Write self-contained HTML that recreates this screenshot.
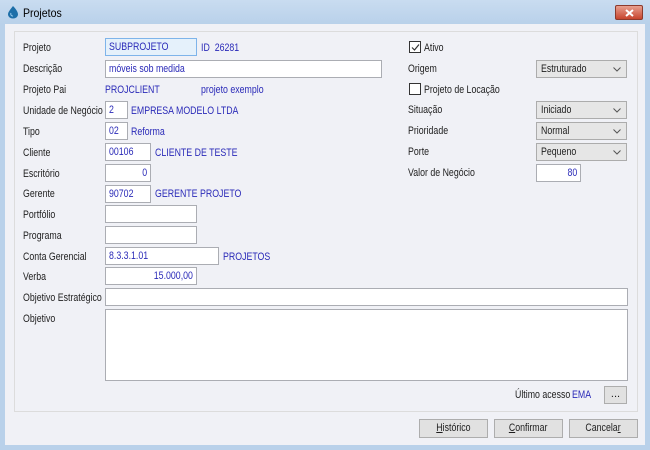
<!DOCTYPE html>
<html><head><meta charset="utf-8"><style>
*{box-sizing:border-box;margin:0;padding:0}
body{width:650px;height:450px;overflow:hidden;background:#b9d1ea;font-family:"Liberation Sans",sans-serif;font-size:11px;color:#1e1e1e;position:relative}
.a{position:absolute;white-space:nowrap}
.title{left:0;top:0;width:650px;height:24px;background:linear-gradient(#c9dcf0,#b9d1ea)}
.client{left:5px;top:24px;width:640px;height:421px;background:#f0f1f6}
.grp{left:14px;top:31px;width:624px;height:381px;border:1px solid #dcdcdc}
.lb{line-height:13px;transform:scaleX(.8);transform-origin:0 0}
.blue{color:#2a2ab8}
.in{background:#fff;border:1px solid #abadb3;height:18px;padding:2px 3px 0;line-height:13px;color:#2a2ab8}
.sel{background:#e6e6e6;border:1px solid #acacac;height:18px;padding:2px 4px 0;line-height:13px;color:#1e1e1e}
.sel svg{position:absolute;right:5px;top:6px}
.t{display:inline-block;transform:scaleX(.8);transform-origin:0 0}
.r{text-align:right}.r .t{transform-origin:100% 0}
.btn{background:#e1e1e1;border:1px solid #adadad;height:19px;text-align:center;line-height:17px}
.btn .t{transform-origin:50% 0}
.cb{width:12px;height:12px;border:1px solid #333;background:#fff}
</style></head><body>
<div class="a title"></div>
<svg class="a" style="left:7px;top:5px" width="12" height="14" viewBox="0 0 12 14"><path d="M6 1 C3 5 1 7 1 9.5 A5 4 0 0 0 11 9.5 C11 7 9 4 6 1Z" fill="#1e6fa8"/><path d="M4 8 A2 2 0 0 0 6 11" stroke="#9fd0f0" fill="none"/></svg>
<div class="a" style="left:23px;top:6px;font-size:12px;color:#000"><span class="t" style="transform:scaleX(.88)">Projetos</span></div>
<div class="a" style="left:615px;top:5px;width:28px;height:15px;background:linear-gradient(#e8a08f,#c7442d);border:1px solid #8c3a2c;border-radius:2px"><svg style="position:absolute;left:9px;top:3px" width="9" height="8"><path d="M1 1L8 7M8 1L1 7" stroke="#fff" stroke-width="2"/></svg></div>
<div class="a client"></div>
<div class="a grp"></div>

<div class="a lb" style="left:23px;top:42px">Projeto</div>
<div class="a in" style="left:105px;top:38px;width:92px;background:#e5f1fb;border-color:#7eb4ea"><span class="t">SUBPROJETO</span></div>
<div class="a lb blue" style="left:201px;top:42px">ID&nbsp; 26281</div>

<div class="a lb" style="left:23px;top:63px">Descrição</div>
<div class="a in" style="left:105px;top:60px;width:277px"><span class="t">móveis sob medida</span></div>

<div class="a lb" style="left:23px;top:84px">Projeto Pai</div>
<div class="a lb blue" style="left:105px;top:84px">PROJCLIENT</div>
<div class="a lb blue" style="left:201px;top:84px">projeto exemplo</div>

<div class="a lb" style="left:23px;top:105px">Unidade de Negócio</div>
<div class="a in" style="left:105px;top:101px;width:23px"><span class="t">2</span></div>
<div class="a lb blue" style="left:131px;top:105px">EMPRESA MODELO LTDA</div>

<div class="a lb" style="left:23px;top:126px">Tipo</div>
<div class="a in" style="left:105px;top:122px;width:23px"><span class="t">02</span></div>
<div class="a lb blue" style="left:131px;top:126px">Reforma</div>

<div class="a lb" style="left:23px;top:147px">Cliente</div>
<div class="a in" style="left:105px;top:143px;width:46px"><span class="t">00106</span></div>
<div class="a lb blue" style="left:155px;top:147px">CLIENTE DE TESTE</div>

<div class="a lb" style="left:23px;top:168px">Escritório</div>
<div class="a in r" style="left:105px;top:164px;width:46px"><span class="t">0</span></div>

<div class="a lb" style="left:23px;top:188px">Gerente</div>
<div class="a in" style="left:105px;top:185px;width:46px"><span class="t">90702</span></div>
<div class="a lb blue" style="left:155px;top:188px">GERENTE PROJETO</div>

<div class="a lb" style="left:23px;top:209px">Portfólio</div>
<div class="a in" style="left:105px;top:205px;width:92px"></div>

<div class="a lb" style="left:23px;top:230px">Programa</div>
<div class="a in" style="left:105px;top:226px;width:92px"></div>

<div class="a lb" style="left:23px;top:251px">Conta Gerencial</div>
<div class="a in" style="left:105px;top:247px;width:114px"><span class="t">8.3.3.1.01</span></div>
<div class="a lb blue" style="left:223px;top:251px">PROJETOS</div>

<div class="a lb" style="left:23px;top:271px">Verba</div>
<div class="a in r" style="left:105px;top:267px;width:92px"><span class="t">15.000,00</span></div>

<div class="a lb" style="left:23px;top:292px">Objetivo Estratégico</div>
<div class="a in" style="left:105px;top:288px;width:523px"></div>

<div class="a lb" style="left:23px;top:313px">Objetivo</div>
<div class="a in" style="left:105px;top:309px;width:523px;height:72px"></div>

<div class="a cb" style="left:409px;top:41px"><svg style="position:absolute;left:1px;top:1px" width="9" height="9"><path d="M1 4.5L3.5 7L8 1.5" stroke="#333" fill="none" stroke-width="1.2"/></svg></div>
<div class="a lb" style="left:424px;top:42px">Ativo</div>

<div class="a lb" style="left:408px;top:63px">Origem</div>
<div class="a sel" style="left:536px;top:60px;width:91px"><span class="t">Estruturado</span><svg width="8" height="5"><path d="M0.5 0.5L4 4L7.5 0.5" stroke="#555" fill="none"/></svg></div>

<div class="a cb" style="left:409px;top:83px"></div>
<div class="a lb" style="left:424px;top:84px">Projeto de Locação</div>

<div class="a lb" style="left:408px;top:104px">Situação</div>
<div class="a sel" style="left:536px;top:101px;width:91px"><span class="t">Iniciado</span><svg width="8" height="5"><path d="M0.5 0.5L4 4L7.5 0.5" stroke="#555" fill="none"/></svg></div>

<div class="a lb" style="left:408px;top:125px">Prioridade</div>
<div class="a sel" style="left:536px;top:122px;width:91px"><span class="t">Normal</span><svg width="8" height="5"><path d="M0.5 0.5L4 4L7.5 0.5" stroke="#555" fill="none"/></svg></div>

<div class="a lb" style="left:408px;top:146px">Porte</div>
<div class="a sel" style="left:536px;top:143px;width:91px"><span class="t">Pequeno</span><svg width="8" height="5"><path d="M0.5 0.5L4 4L7.5 0.5" stroke="#555" fill="none"/></svg></div>

<div class="a lb" style="left:408px;top:167px">Valor de Negócio</div>
<div class="a in r" style="left:536px;top:164px;width:45px"><span class="t">80</span></div>

<div class="a lb" style="left:515px;top:389px">Último acesso</div>
<div class="a lb blue" style="left:572px;top:389px">EMA</div>
<div class="a btn" style="left:604px;top:386px;width:23px;height:18px;line-height:14px">...</div>

<div class="a btn" style="left:419px;top:419px;width:69px"><span class="t"><u>H</u>istórico</span></div>
<div class="a btn" style="left:494px;top:419px;width:69px"><span class="t"><u>C</u>onfirmar</span></div>
<div class="a btn" style="left:569px;top:419px;width:69px"><span class="t">Cancela<u>r</u></span></div>
</body></html>
